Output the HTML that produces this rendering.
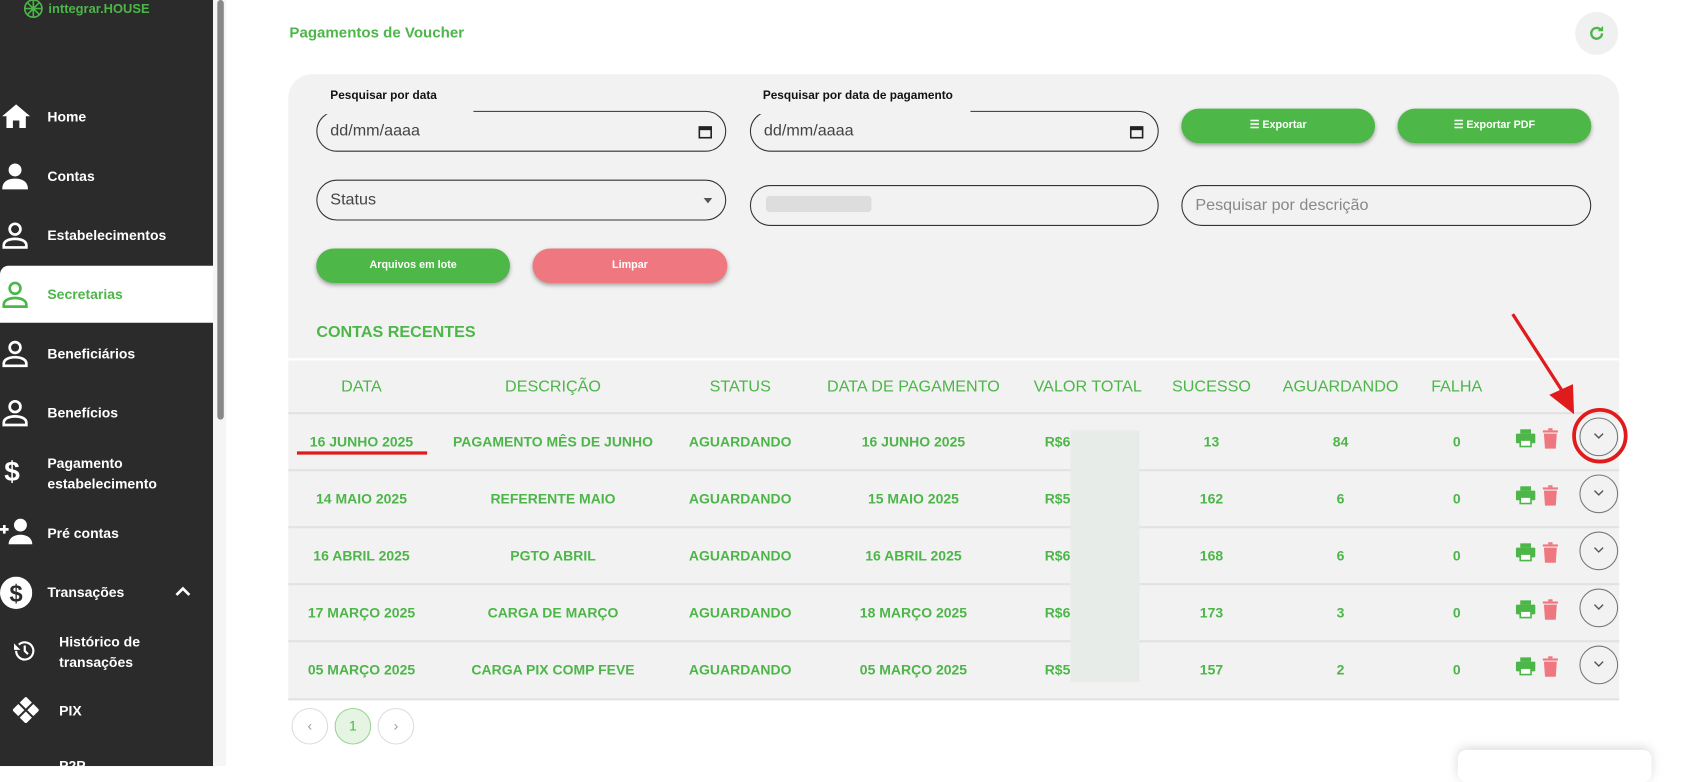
<!DOCTYPE html>
<html><head><meta charset="utf-8"><style>
*{box-sizing:border-box;margin:0;padding:0}
html,body{width:1687px;height:766px;overflow:hidden;background:#fff;font-family:"Liberation Sans",sans-serif}
#w{position:absolute;left:0;top:0;width:1568px;height:712px;transform:scale(1.0759);transform-origin:0 0}
.a{position:absolute}
.side{left:0;top:0;width:198px;height:712px;background:#2b2b2b}
.mi{position:absolute;left:44px;color:#fff;font-weight:bold;font-size:13px;line-height:19px}
.ic{position:absolute;left:2px}
.g{color:#4cb648}
.inp{position:absolute;height:38px;border:1px solid #333;border-radius:20px;font-size:15px;color:#444;padding-left:12px;line-height:36px}
.btn{position:absolute;height:32px;border-radius:16px;background:#4db748;color:#fff;font-weight:bold;font-size:10px;text-align:center;line-height:32px;box-shadow:0 2px 4px rgba(0,0,0,.35)}
.lbl{position:absolute;font-size:11px;font-weight:bold;color:#111}
.th{position:absolute;top:351px;font-size:15px;color:#4cb648;transform:translateX(-50%);white-space:nowrap}
.row{position:absolute;left:268px;width:1237px;height:53px;border-top:2px solid #e2e2e2}
.td{position:absolute;top:18px;font-size:13px;font-weight:bold;color:#4cb648;transform:translateX(-50%);white-space:nowrap}
.rs{position:absolute;top:18px;left:703px;font-size:13px;font-weight:bold;color:#4cb648}
.chev{position:absolute;left:1200px;top:3px;width:36px;height:36px;border:1px solid #777;border-radius:50%}
.pg{position:absolute;top:658px;width:34px;height:34px;border-radius:50%;border:1px solid #ddd;text-align:center;line-height:32px;font-size:13px;color:#999}
</style></head><body><div id="w">
<div class="a side"></div>
<div class="a" style="left:198px;top:0;width:12px;height:712px;background:#f5f5f5"></div>
<div class="a" style="left:202px;top:0;width:6px;height:390px;background:#888;border-radius:3px"></div>
<svg class="a" style="left:20px;top:0" width="22" height="20" viewBox="0 0 22 20"><g fill="none" stroke="#4cb648" stroke-width="1.5"><circle cx="11" cy="8" r="8"/><path d="M3 8h16M11 0v16M5 2l12 12M17 2L5 14"/></g></svg>
<div class="a g" style="left:45px;top:1px;font-size:12px;font-weight:bold">inttegrar.HOUSE</div>
<div class="a" style="left:0;top:247px;width:198px;height:53px;background:#fff;border-radius:8px 0 0 0"></div>
<svg class="ic" style="top:96px" width="26" height="24" viewBox="0 0 26 24"><path d="M13 1L0 12h4v11h6v-7h6v7h6V12h4z" fill="#fff"/></svg>
<svg class="ic" style="top:151px" width="24" height="26" viewBox="0 0 24 26"><circle cx="12" cy="7" r="6" fill="#fff"/><path d="M0 25c0-7 5-10 12-10s12 3 12 10z" fill="#fff"/></svg>
<svg class="ic" style="top:206px" width="24" height="26" viewBox="0 0 24 26"><g fill="none" stroke="#fff" stroke-width="2.5"><circle cx="12" cy="7" r="5"/><path d="M1.5 24v-2c0-4 5-6 10.5-6s10.5 2 10.5 6v2z"/></g></svg>
<svg class="ic" style="top:261px" width="24" height="26" viewBox="0 0 24 26"><g fill="none" stroke="#4cb648" stroke-width="2.5"><circle cx="12" cy="7" r="5"/><path d="M1.5 24v-2c0-4 5-6 10.5-6s10.5 2 10.5 6v2z"/></g></svg>
<svg class="ic" style="top:316px" width="24" height="26" viewBox="0 0 24 26"><g fill="none" stroke="#fff" stroke-width="2.5"><circle cx="12" cy="7" r="5"/><path d="M1.5 24v-2c0-4 5-6 10.5-6s10.5 2 10.5 6v2z"/></g></svg>
<svg class="ic" style="top:371px" width="24" height="26" viewBox="0 0 24 26"><g fill="none" stroke="#fff" stroke-width="2.5"><circle cx="12" cy="7" r="5"/><path d="M1.5 24v-2c0-4 5-6 10.5-6s10.5 2 10.5 6v2z"/></g></svg>
<div class="a" style="left:4px;top:423px;color:#fff;font-size:26px;font-weight:bold">$</div>
<svg class="ic" style="left:0;top:482px" width="32" height="24" viewBox="0 0 32 24"><path d="M0 10h8M4 6v8" stroke="#fff" stroke-width="2.5"/><circle cx="19" cy="6" r="6" fill="#fff"/><path d="M8 24c0-6 5-9 11-9s11 3 11 9z" fill="#fff"/></svg>
<svg class="ic" style="left:0;top:536px" width="30" height="30" viewBox="0 0 30 30"><circle cx="15" cy="15" r="15" fill="#fff"/><text x="15" y="23" text-anchor="middle" font-size="22" font-weight="bold" fill="#2b2b2b" font-family="Liberation Sans">$</text></svg>
<svg class="a" style="left:162px;top:544px" width="16" height="12" viewBox="0 0 16 12"><path d="M2 9l6-6 6 6" stroke="#fff" stroke-width="2.5" fill="none"/></svg>
<svg class="a" style="left:12px;top:594px" width="22" height="22" viewBox="0 0 22 22"><g fill="none" stroke="#fff" stroke-width="2"><path d="M3 11a8 8 0 1 0 2.5-5.8"/><path d="M11 6v5l3 3"/></g><path d="M1 4v6h6z" fill="#fff"/></svg>
<svg class="a" style="left:12px;top:648px" width="24" height="24" viewBox="0 0 24 24"><g fill="#fff"><rect x="8" y="1" width="8" height="8" transform="rotate(45 12 5)"/><rect x="8" y="15" width="8" height="8" transform="rotate(45 12 19)"/><rect x="1" y="8" width="8" height="8" transform="rotate(45 5 12)"/><rect x="15" y="8" width="8" height="8" transform="rotate(45 19 12)"/></g></svg>
<div class="mi" style="top:99px">Home</div>
<div class="mi" style="top:154px">Contas</div>
<div class="mi" style="top:209px">Estabelecimentos</div>
<div class="mi g" style="top:264px;color:#4cb648">Secretarias</div>
<div class="mi" style="top:319px">Beneficiários</div>
<div class="mi" style="top:374px">Benefícios</div>
<div class="mi" style="top:421px">Pagamento<br>estabelecimento</div>
<div class="mi" style="top:486px">Pré contas</div>
<div class="mi" style="top:541px">Transações</div>
<div class="mi" style="top:587px;left:55px">Histórico de<br>transações</div>
<div class="mi" style="top:651px;left:55px">PIX</div>
<div class="mi" style="top:702px;left:55px">P2P</div>

<div class="a g" style="left:269px;top:22px;font-size:14px;font-weight:bold">Pagamentos de Voucher</div>
<div class="a" style="left:1464px;top:11px;width:40px;height:40px;border-radius:50%;background:#f0f0f0"></div>
<svg class="a" style="left:1476px;top:23px" width="16" height="16" viewBox="0 0 16 16"><path d="M13 8a5 5 0 1 1-1.5-3.6" fill="none" stroke="#4cb648" stroke-width="2.2"/><path d="M14 1v5h-5z" fill="#4cb648"/></svg>

<div class="a" style="left:268px;top:69px;width:1237px;height:582px;background:#f2f2f2;border-radius:22px 22px 0 0"></div>
<div class="lbl" style="left:307px;top:83px">Pesquisar por data</div>
<div class="lbl" style="left:709px;top:83px">Pesquisar por data de pagamento</div>
<div class="inp" style="left:294px;top:103px;width:381px">dd/mm/aaaa</div>
<div class="inp" style="left:697px;top:103px;width:380px">dd/mm/aaaa</div>
<svg class="a" style="left:649px;top:116px" width="13" height="13" viewBox="0 0 13 13"><rect x="1" y="2" width="11" height="10" fill="none" stroke="#222" stroke-width="1.5"/><rect x="1" y="2" width="11" height="3" fill="#222"/></svg>
<svg class="a" style="left:1050px;top:116px" width="13" height="13" viewBox="0 0 13 13"><rect x="1" y="2" width="11" height="10" fill="none" stroke="#222" stroke-width="1.5"/><rect x="1" y="2" width="11" height="3" fill="#222"/></svg>
<div class="a" style="left:300px;top:100px;width:140px;height:6px;background:#f2f2f2"></div>
<div class="a" style="left:702px;top:100px;width:200px;height:6px;background:#f2f2f2"></div>
<div class="btn" style="left:1098px;top:101px;width:180px">☰ Exportar</div>
<div class="btn" style="left:1299px;top:101px;width:180px">☰ Exportar PDF</div>
<div class="inp" style="left:294px;top:167px;width:381px">Status</div>
<div class="a" style="left:654px;top:184px;border:4px solid transparent;border-top:5px solid #555"></div>
<div class="inp" style="left:697px;top:172px;width:380px"></div>
<div class="a" style="left:712px;top:182px;width:98px;height:15px;background:#ddd;border-radius:3px"></div>
<div class="inp" style="left:1098px;top:172px;width:381px;color:#888">Pesquisar por descrição</div>
<div class="btn" style="left:294px;top:231px;width:180px">Arquivos em lote</div>
<div class="btn" style="left:495px;top:231px;width:181px;background:#ef7880">Limpar</div>
<div class="a g" style="left:294px;top:300px;font-size:15px;font-weight:bold">CONTAS RECENTES</div>
<div class="a" style="left:268px;top:333px;width:1237px;height:2px;background:#fff"></div>
<div class="th" style="left:336px">DATA</div>
<div class="th" style="left:514px">DESCRIÇÃO</div>
<div class="th" style="left:688px">STATUS</div>
<div class="th" style="left:849px">DATA DE PAGAMENTO</div>
<div class="th" style="left:1011px">VALOR TOTAL</div>
<div class="th" style="left:1126px">SUCESSO</div>
<div class="th" style="left:1246px">AGUARDANDO</div>
<div class="th" style="left:1354px">FALHA</div>

<div class="row" style="top:383px"><div class="td" style="left:68px">16 JUNHO 2025</div><div class="td" style="left:246px">PAGAMENTO MÊS DE JUNHO</div><div class="td" style="left:420px">AGUARDANDO</div><div class="td" style="left:581px">16 JUNHO 2025</div><div class="rs">R$61.000,00</div><div class="td" style="left:858px">13</div><div class="td" style="left:978px">84</div><div class="td" style="left:1086px">0</div><div class="chev"></div></div>
<div class="row" style="top:436px"><div class="td" style="left:68px">14 MAIO 2025</div><div class="td" style="left:246px">REFERENTE MAIO</div><div class="td" style="left:420px">AGUARDANDO</div><div class="td" style="left:581px">15 MAIO 2025</div><div class="rs">R$5</div><div class="td" style="left:858px">162</div><div class="td" style="left:978px">6</div><div class="td" style="left:1086px">0</div><div class="chev"></div></div>
<div class="row" style="top:489px"><div class="td" style="left:68px">16 ABRIL 2025</div><div class="td" style="left:246px">PGTO ABRIL</div><div class="td" style="left:420px">AGUARDANDO</div><div class="td" style="left:581px">16 ABRIL 2025</div><div class="rs">R$6</div><div class="td" style="left:858px">168</div><div class="td" style="left:978px">6</div><div class="td" style="left:1086px">0</div><div class="chev"></div></div>
<div class="row" style="top:542px"><div class="td" style="left:68px">17 MARÇO 2025</div><div class="td" style="left:246px">CARGA DE MARÇO</div><div class="td" style="left:420px">AGUARDANDO</div><div class="td" style="left:581px">18 MARÇO 2025</div><div class="rs">R$6</div><div class="td" style="left:858px">173</div><div class="td" style="left:978px">3</div><div class="td" style="left:1086px">0</div><div class="chev"></div></div>
<div class="row" style="top:595px;height:56px;border-bottom:2px solid #e2e2e2"><div class="td" style="left:68px">05 MARÇO 2025</div><div class="td" style="left:246px">CARGA PIX COMP FEVE</div><div class="td" style="left:420px">AGUARDANDO</div><div class="td" style="left:581px">05 MARÇO 2025</div><div class="rs">R$5</div><div class="td" style="left:858px">157</div><div class="td" style="left:978px">2</div><div class="td" style="left:1086px">0</div><div class="chev"></div></div>
<div class="a" style="left:995px;top:400px;width:64px;height:234px;background:#e8ece8"></div>

<svg class="a" style="left:0;top:0" width="1568" height="712">
<g id="ic">
<g fill="#4cb648"><rect x="1413" y="399" width="10" height="4"/><rect x="1409" y="403" width="18" height="9" rx="1"/><rect x="1413" y="409" width="10" height="6" fill="#fff" stroke="#4cb648" stroke-width="1.5"/></g>
<g fill="#ef7880"><rect x="1434" y="400" width="14" height="2"/><rect x="1439" y="398" width="4" height="2"/><path d="M1435 403h12l-1 14h-10z"/></g>
</g>
<use href="#ic" y="53"/><use href="#ic" y="106"/><use href="#ic" y="159"/><use href="#ic" y="212"/>
<g fill="none" stroke="#555" stroke-width="1.3"><path d="M1482 403l4 4 4-4"/><path d="M1482 456l4 4 4-4"/><path d="M1482 509l4 4 4-4"/><path d="M1482 562l4 4 4-4"/><path d="M1482 615l4 4 4-4"/></g>
<line x1="276" y1="421" x2="397" y2="421" stroke="#e01b1b" stroke-width="3"/>
<line x1="1406" y1="292" x2="1455" y2="368" stroke="#e01b1b" stroke-width="3"/>
<path d="M1463 385l-23-18 22-10z" fill="#e01b1b"/>
<circle cx="1487" cy="405" r="24" fill="none" stroke="#e01b1b" stroke-width="3.5"/>
</svg>

<div class="pg" style="left:271px">‹</div>
<div class="pg" style="left:311px;background:#e6f4e4;border-color:#9bd496;color:#4cb648">1</div>
<div class="pg" style="left:351px">›</div>
<div class="a" style="left:1355px;top:697px;width:180px;height:30px;background:#fff;border-radius:8px;box-shadow:0 -2px 10px rgba(0,0,0,.15)"></div>
</div></body></html>
